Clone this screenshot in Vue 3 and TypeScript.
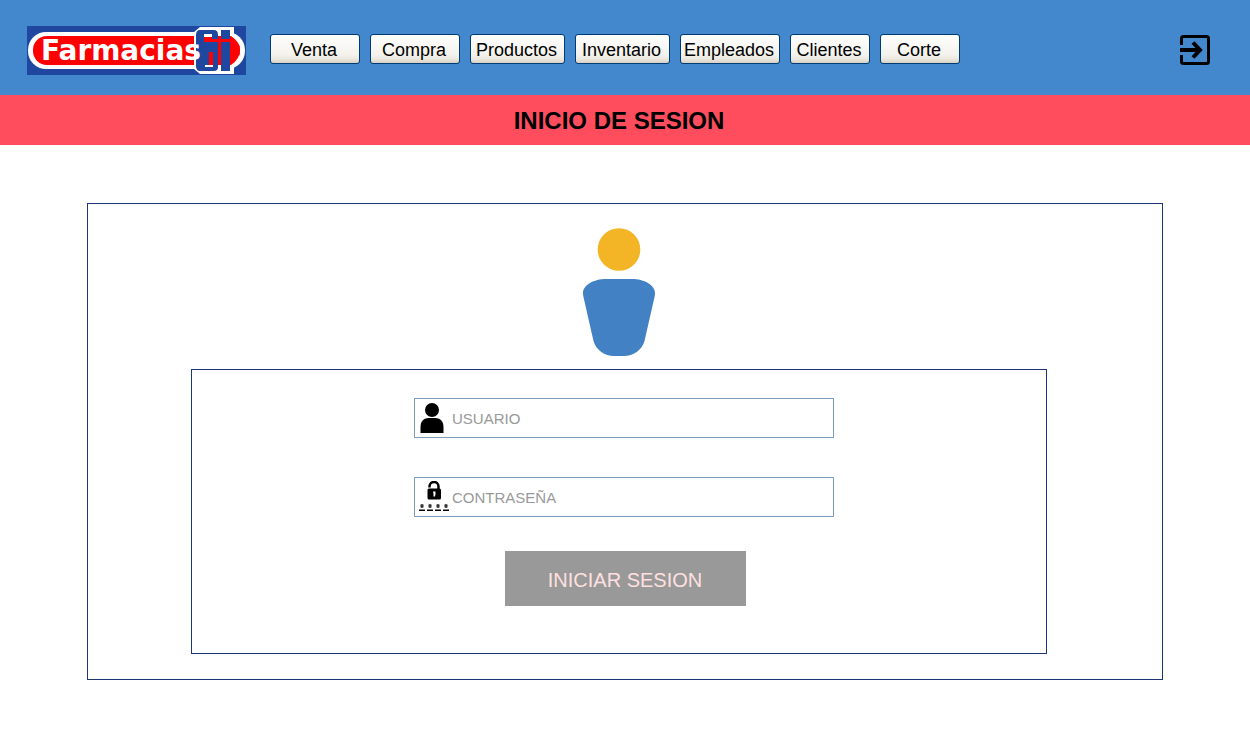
<script setup lang="ts">
import { ref } from 'vue'

interface NavItem {
  label: string
  size: 'small' | 'medium' | 'large' | 'wide'
}

const items: NavItem[] = [
  { label: 'Venta', size: 'medium' },
  { label: 'Compra', size: 'medium' },
  { label: 'Productos', size: 'large' },
  { label: 'Inventario', size: 'large' },
  { label: 'Empleados', size: 'wide' },
  { label: 'Clientes', size: 'small' },
  { label: 'Corte', size: 'small' },
]

const usuario = ref('')
const contrasena = ref('')
</script>

<template>
  <div class="page">
    <header class="topbar">
      <svg class="logo" viewBox="0 0 219 49" role="img" aria-label="Farmacias SI">
        <rect width="219" height="49" fill="#1f479f" />
        <rect x="1" y="6" width="217" height="37" rx="18" fill="#fff" />
        <rect x="6" y="10" width="207" height="29" rx="14" fill="#f00" />
        <path d="M173 1H207V8L212 12V37L207 41V48H173L167 43V6Z" fill="#fff" />
        <path d="M180 10H204Q213 16 213 24Q213 33 204 39H180Z" fill="#f00" />
        <path d="M173 4H187Q191 4 191 9V41Q191 45 187 45H173Q169 45 169 40V9Q169 4 173 4Z" fill="#1f479f" />
        <path d="M194 4H203V45H194Z" fill="#1f479f" />
        <path d="M177 8H185V11H177Z" fill="#fff" />
        <path d="M177 11H185V13H203V16H177Z" fill="#f00" />
        <path d="M182 26H186V39H182Z" fill="#f00" />
        <path d="M178 39H186V41H178Z" fill="#fff" />
        <text class="wordmark" x="14" y="34">Farmacias</text>
      </svg>
      <nav class="menu" aria-label="Principal">
        <button v-for="item in items" :key="item.label" type="button" class="menu-button" :class="item.size">
          {{ item.label }}
        </button>
      </nav>
      <button type="button" class="exit" aria-label="Salir">
        <svg width="32" height="30" viewBox="0 0 32 30" fill="none" stroke="#000" stroke-width="3">
          <path d="M2.500 10V3.500Q2.500 1.500 4.500 1.500H27.500Q29.500 1.500 29.500 3.500V26.500Q29.500 28.500 27.500 28.500H4.500Q2.500 28.500 2.500 26.500V20" />
          <path d="M1 15H21M14 7.500L21 15L14 22.500" stroke-width="4" />
        </svg>
      </button>
    </header>

    <h1 class="title">INICIO DE SESION</h1>

    <main class="panel">
      <svg class="person" width="72" height="128" viewBox="0 0 72 128" aria-hidden="true">
        <circle cx="36" cy="21.500" r="21.300" fill="#f3b526" />
        <path d="M23 51H49C61 51 72 57 72 65C72 67 71.700 68 71.300 70L61.500 113C59 122 50 128 41 128H31C22 128 13 122 10.500 113L.7 70C.3 68 0 67 0 65C0 57 11 51 23 51Z" fill="#4381c5" />
      </svg>
      <form class="login" @submit.prevent>
        <label class="field">
          <svg width="32" height="32" viewBox="0 0 32 32" aria-hidden="true">
            <circle cx="14" cy="8" r="7" />
            <path d="M2.500 31V25C2.500 19 6 16 11 16H17C22 16 25.500 19 25.500 25V31Z" />
          </svg>
          <input v-model="usuario" type="text" placeholder="USUARIO" aria-label="Usuario" />
        </label>
        <label class="field">
          <svg width="32" height="32" viewBox="0 0 32 32" aria-hidden="true">
            <path d="M11.500 6.500V5.500C11.500 -.5 20.500 -.5 20.500 5.500V9" fill="none" stroke="#000" stroke-width="2.500" />
            <rect x="9.500" y="7.500" width="13.500" height="11" rx="1.500" />
            <path d="M15 10.500H17.500V13L17 15.500H15.500V13Z" fill="#fff" />
            <path d="M1 28.500H7V30H1ZM9 28.500H15V30H9ZM17 28.500H23V30H17ZM25 28.500H31V30H25Z" />
            <path d="M2 25H6M3 23L5 27M5 23L3 27M10 25H14M11 23L13 27M13 23L11 27M18 25H22M19 23L21 27M21 23L19 27M26 25H30M27 23L29 27M29 23L27 27" stroke="#222" />
          </svg>
          <input v-model="contrasena" type="password" placeholder="CONTRASEÑA" aria-label="Contraseña" />
        </label>
        <button type="submit" class="submit">INICIAR SESION</button>
      </form>
    </main>
  </div>
</template>

<style>
body {
  margin: 0;
  background: #fff;
}
</style>

<style scoped>
.page,
.page button,
.page input {
  font-family: "Liberation Sans", Arial, sans-serif;
}
.page * {
  box-sizing: border-box;
}
.topbar {
  display: flex;
  align-items: center;
  min-height: 95px;
  padding: 0 39px 0 27px;
  background: #4388cd;
}
.logo {
  width: 219px;
  height: 49px;
  margin-top: 6px;
  flex: none;
}
.wordmark {
  font: bold 28px "DejaVu Sans", sans-serif;
  fill: #fff;
}
.menu {
  display: flex;
  gap: 10px;
  margin: 3px 0 0 24px;
}
.menu-button {
  height: 30px;
  padding: 2px 2px 0 0;
  border: 1px solid #003c74;
  border-radius: 3px;
  background: linear-gradient(#fff, #f3f2ec 70%, #ece9e1 85%, #d8d0c4);
  color: #000;
  font-size: 18px;
  line-height: 26px;
  white-space: nowrap;
}
.small {
  width: 80px;
}
.medium {
  width: 90px;
}
.large {
  width: 95px;
}
.wide {
  width: 100px;
}
.exit {
  display: flex;
  margin: 4px 0 0 auto;
  padding: 0;
  border: 0;
  background: none;
}
.title {
  margin: 0;
  padding: 2px 12px 0 0;
  background: #ff4d5e;
  color: #000;
  font-size: 24px;
  line-height: 48px;
  text-align: center;
}
.panel {
  display: flex;
  flex-direction: column;
  align-items: center;
  margin: 58px 87px 70px;
  padding: 24px 115px 25px 103px;
  border: 1px solid #1c3678;
}
.person {
  display: block;
}
.login {
  display: flex;
  flex-direction: column;
  align-items: center;
  align-self: stretch;
  margin-top: 13px;
  padding: 28px 0 47px 10px;
  border: 1px solid #1c3678;
}
.field {
  display: flex;
  align-items: center;
  width: 420px;
  height: 40px;
  margin-bottom: 39px;
  padding-left: 3px;
  border: 1px solid #7f9db9;
  background: #fff;
}
.field input {
  flex: 1;
  min-width: 0;
  height: 36px;
  padding: 0 0 0 2px;
  border: 0;
  outline: 0;
  background: none;
  color: #000;
  font-size: 15px;
}
.field input::placeholder {
  color: #999;
  opacity: 1;
}
.submit {
  width: 241px;
  height: 55px;
  margin: -5px 0 0 2px;
  padding: 4px 0 0;
  border: 0;
  background: #999;
  color: #ffe0e0;
  font-size: 20px;
}
</style>
